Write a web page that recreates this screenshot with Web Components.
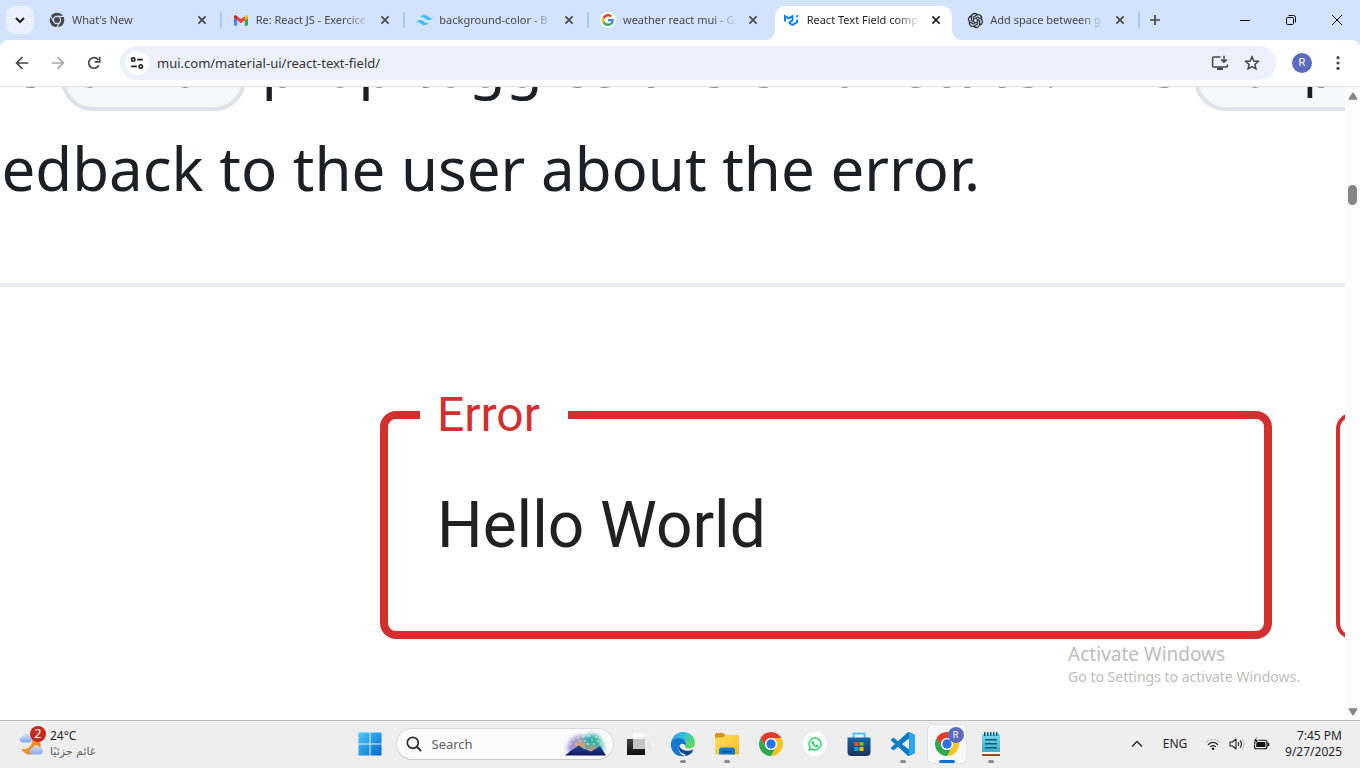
<!DOCTYPE html>
<html lang="en">
<head>
<meta charset="utf-8">
<title>React Text Field component - Material UI</title>
<style>
  html, body { height: 100%; margin: 0; }
  body { font-family: "Noto Sans", "Open Sans", sans-serif; font-size: 12px; color: #1f1f1f; background: #fff; overflow: hidden; }
</style>
</head>
<body>
<desktop-screen></desktop-screen>
<script>
const chromeSector = 'M12 6H22.39A12 12 0 0 0 1.61 6L6.8 15A6 6 0 0 1 12 6Z';
const chromeArt = `<path fill="#e33b2e" d="${chromeSector}"/><path fill="#fcc31e" transform="rotate(120 12 12)" d="${chromeSector}"/><path fill="#2da94f" transform="rotate(240 12 12)" d="${chromeSector}"/><circle cx="12" cy="12" r="6" fill="#fff"/><circle cx="12" cy="12" r="4.7" fill="#2a73e8"/>`;

const ICONS = {
  chevronDown: ['0 0 12 12', '<path d="M2 4 6 8 10 4" fill="none" stroke="#1f1f1f" stroke-width="2"/>'],
  chevronUp: ['0 0 12 12', '<path d="M1 8.5 6 3.5l5 5" fill="none" stroke="#222" stroke-width="1.3"/>'],
  close: ['0 0 10 10', '<path d="M1.4 1.4l7.2 7.2M8.6 1.4 1.4 8.6" stroke="currentColor" stroke-width="1.7"/>'],
  plus: ['0 0 12 12', '<path d="M6 1v10M1 6h10" stroke="#444746" stroke-width="1.7"/>'],
  back: ['0 0 14 14', '<path d="M7.4 1.2 1.6 7l5.8 5.8M1.8 7H13.3" fill="none" stroke="#474747" stroke-width="1.7"/>'],
  forward: ['0 0 14 14', '<path d="M6.6 1.2 12.4 7l-5.8 5.8M12.2 7H.7" fill="none" stroke="#a8a8a8" stroke-width="1.7"/>'],
  reload: ['0 0 14 14', '<path d="M11.8 9.2A5.3 5.3 0 1 1 11.4 4" fill="none" stroke="#474747" stroke-width="1.7"/><path d="M12.7.8V5.8H7.7" fill="none" stroke="#474747" stroke-width="1.7"/>'],
  tune: ['0 0 14 14', '<g fill="none" stroke="#1f1f1f" stroke-width="1.6"><circle cx="3.2" cy="3.6" r="1.7"/><path d="M7.2 3.6h5.6M1.2 10.4h5.6"/><circle cx="10.8" cy="10.4" r="1.7"/></g>'],
  install: ['0 0 18 16', '<path d="M9.5 1.9H2.6q-1 0-1 1v8q0 1 1 1h12.8q1 0 1-1V9.4" fill="none" stroke="#474747" stroke-width="1.5"/><path d="M6 12.5h6V15H6z" fill="#474747"/><path d="M13 .8v6M10.2 4.4 13 7.2l2.8-2.8" fill="none" stroke="#474747" stroke-width="1.5"/>'],
  star: ['0 0 16 16', '<path d="M8 1.9 9.8 6l4.5.4-3.4 3 1 4.4L8 11.5l-3.9 2.3 1-4.4-3.4-3L6.2 6Z" fill="none" stroke="#474747" stroke-width="1.5"/>'],
  dots: ['0 0 4 16', '<g fill="#474747"><circle cx="2" cy="2.7" r="1.6"/><circle cx="2" cy="8" r="1.6"/><circle cx="2" cy="13.3" r="1.6"/></g>'],
  minimize: ['0 0 10 10', '<path d="M0 5.5h10" stroke="#000"/>'],
  restore: ['0 0 10 10', '<rect x=".5" y="2.5" width="7" height="7" rx="1.2" fill="none" stroke="#000"/><path d="M2.6.5H7.5a2 2 0 0 1 2 2V7.4" fill="none" stroke="#000"/>'],
  exit: ['0 0 10 10', '<path d="M0 0l10 10M10 0 0 10" stroke="#000"/>'],
  chromeMono: ['0 0 24 24', '<circle cx="12" cy="12" r="11" fill="#474a4d"/><g fill="none" stroke="#d3e3fd" stroke-width="1.7"><circle cx="12" cy="12" r="5.4"/><path d="M12 6.6H23M7.3 14.7 1.8 5.2M16.7 14.7 11.2 24.2"/></g>'],
  gmail: ['0 0 24 18', '<path fill="#4285f4" d="M1.6 18h3.8V8.7L0 4.6v11.8C0 17.3.7 18 1.6 18"/><path fill="#34a853" d="M18.6 18h3.8c.9 0 1.6-.7 1.6-1.6V4.6l-5.4 4.1"/><path fill="#fbbc04" d="M18.6 1.6v7.1L24 4.6V2.5c0-2-2.3-3.2-3.9-2"/><path fill="#ea4335" d="M5.4 8.7V1.6L12 6.6l6.6-5v7.1l-6.6 5"/><path fill="#c5221f" d="M0 2.5v2.1l5.4 4.1V1.6L3.9.5C2.3-.7 0 .5 0 2.5"/>'],
  tailwind: ['2 4 20 16', '<path fill="#38bdf8" d="M12 6c-2.67 0-4.33 1.33-5 4 1-1.33 2.17-1.83 3.5-1.5.76.19 1.31.74 1.91 1.35.98 1 2.09 2.15 4.59 2.15 2.67 0 4.33-1.33 5-4-1 1.33-2.17 1.83-3.5 1.5-.76-.19-1.3-.74-1.91-1.35C15.61 7.15 14.5 6 12 6m-5 6c-2.67 0-4.33 1.33-5 4 1-1.33 2.17-1.83 3.5-1.5.76.19 1.3.74 1.91 1.35C8.39 16.85 9.5 18 12 18c2.67 0 4.33-1.33 5-4-1 1.33-2.17 1.83-3.5 1.5-.76-.19-1.3-.74-1.91-1.35C10.61 13.15 9.5 12 7 12z"/>'],
  google: ['-8 -8 64 64', '<circle cx="24" cy="24" r="32" fill="#fff"/><path fill="#ea4335" d="M24 9.500c3.540 0 6.710 1.220 9.210 3.600l6.850-6.850C35.900 2.380 30.470 0 24 0 14.620 0 6.510 5.380 2.560 13.220l7.980 6.190C12.430 13.720 17.740 9.500 24 9.500z"/><path fill="#4285f4" d="M46.980 24.550c0-1.570-.15-3.090-.38-4.550H24v9.020h12.940c-.58 2.960-2.260 5.480-4.780 7.180l7.730 6c4.510-4.180 7.090-10.360 7.090-17.650z"/><path fill="#fbbc05" d="M10.530 28.590c-.48-1.450-.76-2.990-.76-4.590s.27-3.140.76-4.590l-7.980-6.190C.92 16.460 0 20.120 0 24c0 3.880.92 7.540 2.560 10.780l7.970-6.190z"/><path fill="#34a853" d="M24 48c6.480 0 11.930-2.130 15.890-5.810l-7.730-6c-2.150 1.450-4.920 2.300-8.160 2.300-6.260 0-11.570-4.220-13.470-9.910l-7.980 6.190C6.510 42.620 14.620 48 24 48z"/>'],
  mui: ['0 0 24 24', '<path fill="#007fff" d="M0 2.475v10.39l3 1.733V7.67l4.5 2.6 4.5-2.6v3.465l-4.5 2.596v3.467l6 3.463 9-5.195V9.402l-3 1.733v2.598l-6 3.463-3-1.732 4.5-2.6V2.474L7.5 6.8ZM22.500 2.475l-3 1.733v3.465l3-1.733Z"/>'],
  openai: ['0 0 24 24', '<path fill="#202123" stroke="#202123" stroke-width=".5" d="M22.2819 9.8211a5.9847 5.9847 0 0 0-.5157-4.9108 6.0462 6.0462 0 0 0-6.5098-2.9A6.0651 6.0651 0 0 0 4.9807 4.1818a5.9847 5.9847 0 0 0-3.9977 2.9 6.0462 6.0462 0 0 0 .7427 7.0966 5.98 5.98 0 0 0 .511 4.9107 6.051 6.051 0 0 0 6.5146 2.9001A5.9847 5.9847 0 0 0 13.2599 24a6.0557 6.0557 0 0 0 5.7718-4.2058 5.9894 5.9894 0 0 0 3.9977-2.9001 6.0557 6.0557 0 0 0-.7475-7.0729zm-9.022 12.6081a4.4755 4.4755 0 0 1-2.8764-1.0408l.1419-.0804 4.7783-2.7582a.7948.7948 0 0 0 .3927-.6813v-6.7369l2.02 1.1686a.071.071 0 0 1 .038.052v5.5826a4.504 4.504 0 0 1-4.4945 4.4944zm-9.6607-4.1254a4.4708 4.4708 0 0 1-.5346-3.0137l.142.0852 4.783 2.7582a.7712.7712 0 0 0 .7806 0l5.8428-3.3685v2.3324a.0804.0804 0 0 1-.0332.0615L9.74 19.9502a4.4992 4.4992 0 0 1-6.1408-1.6464zM2.3408 7.8956a4.485 4.485 0 0 1 2.3655-1.9728V11.6a.7664.7664 0 0 0 .3879.6765l5.8144 3.3543-2.0201 1.1685a.0757.0757 0 0 1-.071 0l-4.8303-2.7865A4.504 4.504 0 0 1 2.3408 7.872zm16.5963 3.8558L13.1038 8.364 15.1192 7.2a.0757.0757 0 0 1 .071 0l4.8303 2.7913a4.4944 4.4944 0 0 1-.6765 8.1042v-5.6772a.79.79 0 0 0-.407-.667zm2.0107-3.0231l-.142-.0852-4.7735-2.7818a.7759.7759 0 0 0-.7854 0L9.409 9.2297V6.8974a.0662.0662 0 0 1 .0284-.0615l4.8303-2.7866a4.4992 4.4992 0 0 1 6.6802 4.66zM8.3065 12.863l-2.02-1.1638a.0804.0804 0 0 1-.038-.0567V6.0742a4.4992 4.4992 0 0 1 7.3757-3.4537l-.142.0805L8.704 5.459a.7948.7948 0 0 0-.3927.6813zm1.0976-2.3654l2.602-1.4998 2.6069 1.4998v2.9994l-2.5974 1.4997-2.6067-1.4997Z"/>'],
  weather: ['0 0 26 26', '<defs><linearGradient id="m" x2="1" y2="1"><stop stop-color="#fbb62c"/><stop offset="1" stop-color="#ea6a16"/></linearGradient><linearGradient id="c" y2="1" x2="0"><stop stop-color="#d9e5fa"/><stop offset="1" stop-color="#86aaea"/></linearGradient></defs><path fill="url(#m)" d="M3 17.500c5.500 2 11-1 11.500-9.500h3c6 1 7 10 2 13-5 4-13 3.500-16.500-3.500z"/><path fill="url(#c)" d="M4 11.500a3 3 0 0 1-.5-5.600Q5.200 5.500 5.500 4.500C6.500 1.500 10.500 1.500 11.300 4.500c3-.2 4 7 0 7z"/><path fill="url(#c)" d="M13.500 23.500a3 3 0 0 1-.5-5.600q1.700-.4 2-1.400c1-3 6-3 6.800.2 4 .3 4 6.800 0 6.800z"/>'],
  windows: ['0 0 24 24', '<defs><linearGradient id="w" x2="1" y2="1"><stop stop-color="#4ccbfb"/><stop offset="1" stop-color="#0067ce"/></linearGradient></defs><path fill="url(#w)" d="M.5.5h11v11H.5zM12.500.5h11v11h-11zM.5 12.500h11v11H.5zM12.500 12.500h11v11h-11z"/>'],
  search: ['0 0 16 16', '<circle cx="6.800" cy="6.800" r="5.500" fill="none" stroke="#2b2b2b" stroke-width="1.700"/><path d="m10.800 10.800 4.200 4.200" stroke="#2b2b2b" stroke-width="2"/>'],
  fireworks: ['0 0 44 24', '<defs><linearGradient id="h" x2="0" y2="1"><stop stop-color="#1f49a6"/><stop offset="1" stop-color="#121857"/></linearGradient><linearGradient id="s"><stop stop-color="#8f8de8"/><stop offset=".3" stop-color="#9a90cf"/><stop offset=".5" stop-color="#29a7b4"/><stop offset=".8" stop-color="#30b69e"/><stop offset="1" stop-color="#9ccfe0"/></linearGradient><filter id="b" x="-.2" y="-.2" width="1.4" height="1.4"><feGaussianBlur stdDeviation="2"/></filter></defs><g filter="url(#b)"><path fill="url(#s)" d="M4 20C2 12 8 4 15 4c5 0 5 1 8 0 5-3 13-1 14 4 3 4 4 8 3 12z"/><circle cx="16" cy="14" r="5" fill="#e0a458"/><path fill="#ee7f4c" d="M22 21l6-7 7 7z"/></g><path fill="url(#h)" d="M1 23.500l6-5 8-5 4 3 3 1 5 2 9-5.500 6 9.500z"/><g fill="#fff3b0"><circle cx="10" cy="8" r=".8"/><circle cx="14" cy="6" r=".7"/><circle cx="19" cy="5" r=".8"/><circle cx="7" cy="12" r=".7"/><circle cx="16" cy="9" r=".7"/><circle cx="21" cy="9" r=".8"/><circle cx="24" cy="12" r=".9"/><circle cx="28" cy="8" r=".8"/><circle cx="32" cy="5" r=".8"/><circle cx="34" cy="9" r=".8"/><circle cx="30" cy="12" r=".7"/><circle cx="37" cy="12" r=".7"/><circle cx="25" cy="4" r=".7"/><circle cx="12" cy="12" r=".7"/></g>'],
  taskview: ['0 0 24 24', '<defs><linearGradient id="d" x2="0" y2="1"><stop stop-color="#444"/><stop offset="1" stop-color="#0c0c0c"/></linearGradient><linearGradient id="l" x2="1" y2="1"><stop stop-color="#fff"/><stop offset="1" stop-color="#e2e2e2"/></linearGradient></defs><path fill="url(#l)" d="M6 1h18v16H6z"/><path fill="url(#d)" d="M0 7h18v16H0z"/><path fill="#c4c4c4" d="M6 7h12v10H6z"/>'],
  edge: ['0 0 24 24', '<defs><linearGradient id="e1" x2="1" y2=".6"><stop stop-color="#2b9be6"/><stop offset=".5" stop-color="#34c1d8"/><stop offset="1" stop-color="#5fdc55"/></linearGradient><linearGradient id="e2" x2="0" y2="1"><stop stop-color="#1b83d6"/><stop offset="1" stop-color="#0d5bb5"/></linearGradient></defs><path fill="url(#e1)" d="M0 11.500C.5 5 5.500 0 12 0c7.500 0 12 5.500 12 10.500 0 4-3 6-6 6-2.500 0-4-.8-4-1.500s1-1 1-3.500C15 9 12.500 7 9 7c-4 0-8 2-9 4.500z"/><path fill="url(#e2)" d="M0 12c0-4 4-6 8-5.500-3 2-4 4-4 7 0 5.500 4 9.500 9 10.400C5 25 0 19 0 12z"/><path fill="#1577cf" d="M0 12c.3-3.500 4.500-6 9-5.700 3.500.2 6 2.500 6 5.200 0 1-.4 1.800-.8 2.400C13 11 9.500 11 8 15c-1 4 2 8.500 6 8.900C6 25.500 0 20 0 12z"/><path fill="#0e4a92" d="M8.200 14C7 18 10 22 14 22c3.500 0 6-1.500 8-3.500.6-.6-.1-1-.6-.7-5.400 2.500-11.400.2-13.200-3.800zM14 23.800c3.500-.1 6.300-2 8.200-4.800-3 2-6 2.800-8.200 2.500z"/>'],
  explorer: ['0 0 24 24', '<defs><linearGradient id="f" x2="1" y2="1"><stop stop-color="#ffdf66"/><stop offset="1" stop-color="#fdb913"/></linearGradient></defs><path fill="#d9940a" d="M0 2.500Q0 1 1.500 1H8l3 2.500L8 7H0z"/><path fill="url(#f)" d="M0 5.500h8L10.500 3H22.500Q24 3 24 4.500v18H0z"/><path fill="#1278d2" d="M4 22.500V18q0-2.500 2.500-2.500h11Q20 15.500 20 18v4.500z"/><path fill="#0a4f9c" d="M7.500 19h9v1.500h-9z"/>'],
  chrome: ['0 0 24 24', chromeArt],
  whatsapp: ['-10 -10 44 44', '<circle cx="12" cy="12" r="22" fill="#fff"/><path fill="#25d366" stroke="#25d366" stroke-width=".8" d="M17.472 14.382c-.297-.149-1.758-.867-2.030-.967-.273-.099-.471-.148-.67.15-.197.297-.767.966-.94 1.164-.173.199-.347.223-.644.075-.297-.15-1.255-.463-2.390-1.475-.883-.788-1.480-1.761-1.653-2.059-.173-.297-.018-.458.13-.606.134-.133.298-.347.446-.52.149-.174.198-.298.298-.497.099-.198.05-.371-.025-.52-.075-.149-.669-1.612-.916-2.207-.242-.579-.487-.5-.669-.51-.173-.008-.371-.01-.57-.01-.198 0-.52.074-.792.372-.272.297-1.040 1.016-1.040 2.479 0 1.462 1.065 2.875 1.213 3.074.149.198 2.096 3.200 5.077 4.487.709.306 1.262.489 1.694.625.712.227 1.360.195 1.871.118.571-.085 1.758-.719 2.006-1.413.248-.694.248-1.289.173-1.413-.074-.124-.272-.198-.57-.347m-5.421 7.403h-.004a9.870 9.870 0 0 1-5.031-1.378l-.361-.214-3.741.982.998-3.648-.235-.374a9.860 9.860 0 0 1-1.510-5.260c.001-5.450 4.436-9.884 9.888-9.884 2.640 0 5.122 1.030 6.988 2.898a9.825 9.825 0 0 1 2.893 6.994c-.003 5.450-4.437 9.884-9.885 9.884m8.413-18.297A11.815 11.815 0 0 0 12.050 0C5.495 0 .16 5.335.157 11.892c0 2.096.547 4.142 1.588 5.945L.057 24l6.305-1.654a11.882 11.882 0 0 0 5.683 1.448h.005c6.554 0 11.890-5.335 11.893-11.893a11.821 11.821 0 0 0-3.480-8.413z"/>'],
  store: ['0 0 24 24', '<defs><linearGradient id="t" x2="0" y2="1"><stop stop-color="#1666ad"/><stop offset="1" stop-color="#1b3458"/></linearGradient></defs><path d="M6.500 6V1.500h11V6" fill="none" stroke="#4fc3f7" stroke-width="2"/><path fill="url(#t)" d="M.5 5.500h23V20q0 4-4 4h-15q-4 0-4-4z"/><path fill="#f25022" d="M7.500 10H11.500v4H7.500z"/><path fill="#7fba00" d="M12.500 10h4v4h-4z"/><path fill="#00a4ef" d="M7.500 15H11.500v4H7.500z"/><path fill="#ffb900" d="M12.500 15h4v4h-4z"/>'],
  vscode: ['0 0 24 24', '<path fill="#0a7bc8" d="M23.150 2.587L18.210.21a1.494 1.494 0 0 0-1.705.29l-9.460 8.630-4.120-3.128a.999.999 0 0 0-1.276.057L.327 7.261A1 1 0 0 0 .326 8.740L3.899 12 .326 15.260a1 1 0 0 0 .001 1.479L1.650 17.940a.999.999 0 0 0 1.276.057l4.120-3.128 9.460 8.630a1.492 1.492 0 0 0 1.704.29l4.942-2.377A1.500 1.500 0 0 0 24 20.060V3.939a1.500 1.500 0 0 0-.85-1.352zm-5.146 14.861L10.826 12l7.178-5.448v10.896z"/><path fill="#2ba3ee" d="M18 .2 24 3v18l-6 2.800z"/>'],
  notepad: ['0 0 24 24', '<defs><linearGradient id="n" x2="0" y2="1"><stop stop-color="#6fdcee"/><stop offset="1" stop-color="#3fa9c6"/></linearGradient></defs><path fill="#fff" d="M3 19h18v4H3z"/><path fill="#9a4a12" d="M3 22h18v2H3z"/><path fill="url(#n)" d="M3 2h18v18H3z"/><path fill="#0c5a72" d="M5 0h1.500v4H5zM8 0h1.500v4H8zM11 0h1.500v4H11zM14 0h1.500v4H14zM17 0h1.500v4H17zM6 7h12v1.500H6zM6 11h12v1.500H6zM6 15h12v1.500H6z"/>'],
  wifi: ['0 0 16 14', '<path d="M1 5.500q7-6.500 14 0" fill="none" stroke="#c2c2c2" stroke-width="1.100"/><g fill="none" stroke="#222" stroke-width="1.200"><path d="M3 7.700q5-4.600 10 0M5.200 9.900q2.800-2.600 5.600 0"/></g><circle cx="8" cy="11.800" r="1.300" fill="#222"/>'],
  volume: ['0 0 16 14', '<path d="M1 5h2.500L7 2v10L3.500 9H1z" fill="none" stroke="#222" stroke-width="1.100" stroke-linejoin="round"/><path d="M9 5q1.500 2 0 4M11 3.300q3 3.700 0 7.400" fill="none" stroke="#222" stroke-width="1.100"/><path d="M13 1.800q4 5.200 0 10.400" fill="none" stroke="#c2c2c2" stroke-width="1.100"/>'],
  battery: ['0 0 17 14', '<rect x="1.500" y="3.200" width="12.500" height="8.600" rx="2" fill="none" stroke="#111" stroke-width="1.100"/><rect x="3.200" y="5" width="9.200" height="5" fill="#111"/><path d="M14.500 5.800h1.700v3.400h-1.700z" fill="#111"/><path d="M4 -1 .5 4.500h2L1.800 8 5.500 3h-2z" fill="#111" stroke="#eee" stroke-width=".6"/>'],
  arrowUp: ['0 0 10 8', '<path d="M5 .5Q5.500.5 6 1.200L9.500 7q0 .8-.8.8H1.300Q.5 7.800.5 7L4 1.200Q4.500.5 5 .5z" fill="#858585"/>'],
  arrowDown: ['0 0 10 8', '<path d="M5 7.500Q5.500 7.500 6 6.800L9.500 1q0-.8-.8-.8H1.300Q.5.2.5 1L4 6.800Q4.500 7.500 5 7.500z" fill="#858585"/>']
};

/* Registers an element whose shadow root is cloned from one template. */
function component(name, css, markup, setup) {
  const template = document.createElement('template');
  template.innerHTML = `<style>*{box-sizing:border-box}button,input{font:inherit;color:inherit;border:0;background:none;padding:0;margin:0;outline:0}button{display:grid;place-items:center}${css}</style>${markup}`;
  customElements.define(name, class extends HTMLElement {
    constructor() {
      super();
      this.attachShadow({ mode: 'open' }).append(template.content.cloneNode(true));
    }
    connectedCallback() { if (setup) setup(this, this.shadowRoot); }
  });
}

component('ui-icon', ':host{display:block;flex:none}svg{display:block;width:100%;height:100%;overflow:visible}', '<svg aria-hidden="true"></svg>', (host, root) => {
  const [box, art] = ICONS[host.getAttribute('name')];
  const svg = root.querySelector('svg');
  svg.setAttribute('viewBox', box);
  svg.innerHTML = art;
  host.style.width = host.getAttribute('w') + 'px';
  host.style.height = (host.getAttribute('h') || host.getAttribute('w')) + 'px';
});

component('user-avatar', ':host{display:grid;place-items:center;width:20px;height:20px;border-radius:50%;background:#5c6bc0;color:#fff;font:11px/20px Roboto,sans-serif}:host([small]){width:16px;height:16px;font-size:9px;line-height:16px}', '<slot></slot>');

component('browser-tab', `
  :host{display:flex;position:relative;min-width:0;height:40px;padding:6px 3px 0;color:#474747;font-size:11px}
  .face{display:flex;flex:1;min-width:0;align-items:center;height:34px;padding:0 8px 6px 9px}
  .title{flex:1;min-width:0;margin:0 8px 0 7px;overflow:hidden;white-space:nowrap;line-height:20px;-webkit-mask-image:linear-gradient(90deg,#000 calc(100% - 24px),transparent);mask-image:linear-gradient(90deg,#000 calc(100% - 24px),transparent)}
  .icon{display:grid;place-items:center;width:16px;height:16px;flex:none}
  button{width:16px;height:16px;color:#474747}
  :host([divider])::after{content:"";position:absolute;right:-1px;top:12px;width:2px;height:16px;background:#a8c7fa}
  :host([active]){color:#1f1f1f}
  :host([active]) .face{background:#fff;border-radius:10px 10px 0 0}
  :host([active])::before{content:"";position:absolute;left:-7px;right:-7px;bottom:0;height:10px;background:radial-gradient(circle at 0 0,transparent 10px,#fff 10px) left/10px 10px no-repeat,radial-gradient(circle at 100% 0,transparent 10px,#fff 10px) right/10px 10px no-repeat}
  :host([active]) button{color:#1f1f1f}`,
  '<div class="face"><span class="icon"><slot name="icon"></slot></span><span class="title"><slot></slot></span><button aria-label="Close tab"><ui-icon name="close" w="10"></ui-icon></button></div>');

component('tab-strip', `
  :host{display:flex;height:40px;background:#d3e3fd;flex:none}
  .search{width:28px;height:28px;margin:6px 3px 0 6px;border-radius:9px;background:#ebf1fd;flex:none}
  nav{display:grid;grid-template-columns:repeat(6,minmax(0,1fr));flex:0 1 1102px;min-width:0}
  .new{width:32px;flex:none}
  .window{display:flex;margin-left:auto;flex:none}
  .window button{width:46px}`,
  `<button class="search" aria-label="Search tabs"><ui-icon name="chevronDown" w="12"></ui-icon></button>
  <nav>
    <browser-tab divider><ui-icon slot="icon" name="chromeMono" w="16"></ui-icon>What's New</browser-tab>
    <browser-tab divider><ui-icon slot="icon" name="gmail" w="14" h="11"></ui-icon>Re: React JS - Exercice</browser-tab>
    <browser-tab divider><ui-icon slot="icon" name="tailwind" w="17" h="14"></ui-icon>background-color - B</browser-tab>
    <browser-tab><ui-icon slot="icon" name="google" w="16"></ui-icon>weather react mui - G</browser-tab>
    <browser-tab active><ui-icon slot="icon" name="mui" w="15"></ui-icon>React Text Field comp</browser-tab>
    <browser-tab divider><ui-icon slot="icon" name="openai" w="15"></ui-icon>Add space between g</browser-tab>
  </nav>
  <button class="new" aria-label="New tab"><ui-icon name="plus" w="12"></ui-icon></button>
  <div class="window">
    <button aria-label="Minimize"><ui-icon name="minimize" w="10"></ui-icon></button>
    <button aria-label="Restore"><ui-icon name="restore" w="10"></ui-icon></button>
    <button aria-label="Close"><ui-icon name="exit" w="10"></ui-icon></button>
  </div>`);

component('browser-toolbar', `
  :host{display:block;background:#d3e3fd;flex:none}
  .bar{display:flex;align-items:center;height:47px;padding:0 4px;background:#fff;border-radius:8px 8px 0 0;border-bottom:1px solid #dfe1e0}
  .bar>button{width:36px;height:36px}
  .omnibox{display:flex;align-items:center;flex:1;min-width:0;height:34px;margin:0 8px;padding:0 8px 0 5px;border-radius:17px;background:#ecf0fa}
  .omnibox button{width:32px;height:24px}
  .omnibox .site{width:24px;border-radius:50%;background:#fff}
  input{flex:1;min-width:0;margin-left:8px;font-size:13px;height:24px;color:#333}`,
  `<div class="bar">
    <button aria-label="Back"><ui-icon name="back" w="14"></ui-icon></button>
    <button aria-label="Forward"><ui-icon name="forward" w="14"></ui-icon></button>
    <button aria-label="Reload"><ui-icon name="reload" w="14"></ui-icon></button>
    <div class="omnibox">
      <button class="site" aria-label="Site information"><ui-icon name="tune" w="14"></ui-icon></button>
      <input aria-label="Address" value="mui.com/material-ui/react-text-field/">
      <button aria-label="Install"><ui-icon name="install" w="18" h="16"></ui-icon></button>
      <button aria-label="Bookmark"><ui-icon name="star" w="16"></ui-icon></button>
    </div>
    <button aria-label="Profile"><user-avatar>R</user-avatar></button>
    <button aria-label="Menu"><ui-icon name="dots" w="4" h="16"></ui-icon></button>
  </div>`);

component('code-chip', ':host{display:inline-block;padding:0 9px;border:4px solid #dfe2e7;border-radius:32px;background:#f6f7f9;font:53px/68px "Liberation Mono",monospace}', '<slot></slot>');

component('outlined-field', `
  :host{display:block;flex:none;width:892px;font-family:Roboto,sans-serif}
  fieldset{margin:0;min-width:0;height:248px;padding:0 49px;border:8px solid #d32f2f;border-radius:16px}
  legend{margin:0 0 0 -17px;padding:0 28px 0 17px;font-size:48px;line-height:48px;height:48px;color:#d32f2f}
  input{display:block;width:100%;height:92px;margin-top:40px;font-size:64px;color:#212121}
  :host([resting]) fieldset{border-width:4px}`,
  '<fieldset><legend><label for="value"></label></legend><input id="value"></fieldset>',
  (host, root) => {
    root.querySelector('label').textContent = host.getAttribute('label');
    root.querySelector('input').value = host.getAttribute('value');
  });

component('docs-page', `
  :host{display:block;flex:1;min-width:0;overflow:hidden;background:#fff}
  p{margin:-75px 0 0;font:60px/104px "Noto Sans",sans-serif;color:#1c2025;white-space:nowrap}
  .line{display:block;height:104px}
  .first{margin-left:-59px}
  .second{margin-left:-53px}
  section{margin-top:63px;border-top:4px solid #e8eaee;padding:104px 0 0 380px;display:flex;gap:64px}`,
  `<p><span class="line first">The <code-chip>error</code-chip> prop toggles the error state. The <code-chip>helperText</code-chip> prop</span><span class="line second">feedback to the user about the error.</span></p>
  <section><outlined-field label="Error" value="Hello World"></outlined-field><outlined-field resting label="Error" value="Hello World"></outlined-field></section>`);

component('scroll-bar', `
  :host{display:flex;flex-direction:column;align-items:center;flex:none;width:15px;padding:5px 0 4px;background:#fcfcfc}
  .track{flex:1;width:10px;padding-top:85px}
  .thumb{width:9px;height:20px;border-radius:5px;background:#858585;margin:0 auto}`,
  '<ui-icon name="arrowUp" w="10" h="8"></ui-icon><div class="track"><div class="thumb"></div></div><ui-icon name="arrowDown" w="10" h="8"></ui-icon>');

component('activation-notice', `
  :host{position:absolute;right:60px;bottom:33px;color:#bdbdbd;white-space:nowrap;pointer-events:none}
  strong{display:block;font-weight:400;font-size:19px;line-height:26px}
  span{display:block;font-size:14px;line-height:20px}`,
  '<strong>Activate Windows</strong><span>Go to Settings to activate Windows.</span>');

component('task-button', `
  :host{display:block;position:relative;width:44px;height:46px}
  button{width:38px;height:38px;margin:4px 3px;border-radius:5px}
  :host([running])::after{content:"";position:absolute;left:19px;bottom:4px;width:6px;height:3px;border-radius:2px;background:#8a8a8a}
  :host([active]) button{background:#f8f8f8;box-shadow:0 0 0 1px #e4e4e4}
  :host([active])::after{left:14px;width:16px;background:#0b74d1}
  ::slotted(user-avatar){position:absolute;right:5px;top:6px}`,
  '<button><slot></slot></button><slot name="badge"></slot>',
  (host, root) => root.querySelector('button').setAttribute('aria-label', host.getAttribute('label')));

component('task-bar', `
  :host{display:grid;grid-template-columns:1fr auto 1fr;box-sizing:border-box;height:48px;padding-bottom:1px;flex:none;background:#eee;border-top:1px solid #bdbdbd;line-height:16px}
  .weather{display:flex;align-items:center;gap:6px;justify-self:start;padding-left:18px;position:relative;text-align:left}
  .weather b{position:absolute;left:30px;top:5px;width:16px;height:16px;border-radius:50%;background:#c42b1c;color:#fff;font-weight:400;text-align:center}
  .weather span{display:block}
  .weather .ar{color:#5c5c5c;font-family:"DejaVu Sans",sans-serif;font-size:11px;direction:rtl}
  .apps{display:flex;align-items:center}
  .search{display:flex;align-items:center;width:218px;height:32px;margin:0 3px 0 4px;padding:0 5px 0 9px;border:1px solid #dadada;border-bottom-color:#c8c8c8;border-radius:16px;background:#fbfbfb}
  .search input{flex:1;min-width:0;margin-left:10px;font-size:13px;height:24px}
  .search input::placeholder{color:#5f5f5f;opacity:1}
  .tray{display:flex;align-items:center;justify-content:flex-end;padding-right:18px}
  .tray button{height:40px}
  .clock{display:block;text-align:right}
  .clock span{display:block}`,
  `<button class="weather"><ui-icon name="weather" w="26"></ui-icon><b>2</b><span><span>24°C</span><span class="ar" lang="ar">غائم جزئيًا</span></span></button>
  <div class="apps">
    <task-button label="Start"><ui-icon name="windows" w="24"></ui-icon></task-button>
    <label class="search"><ui-icon name="search" w="16"></ui-icon><input type="search" placeholder="Search" aria-label="Search"><ui-icon name="fireworks" w="44" h="24"></ui-icon></label>
    <task-button label="Task view"><ui-icon name="taskview" w="24"></ui-icon></task-button>
    <task-button label="Edge" running><ui-icon name="edge" w="24"></ui-icon></task-button>
    <task-button label="File Explorer" running><ui-icon name="explorer" w="24"></ui-icon></task-button>
    <task-button label="Chrome"><ui-icon name="chrome" w="24"></ui-icon></task-button>
    <task-button label="WhatsApp"><ui-icon name="whatsapp" w="24"></ui-icon></task-button>
    <task-button label="Store"><ui-icon name="store" w="24"></ui-icon></task-button>
    <task-button label="Visual Studio Code" running><ui-icon name="vscode" w="24"></ui-icon></task-button>
    <task-button label="Chrome, profile R" running active><ui-icon name="chrome" w="24"></ui-icon><user-avatar slot="badge" small>R</user-avatar></task-button>
    <task-button label="Notepad" running><ui-icon name="notepad" w="24"></ui-icon></task-button>
  </div>
  <div class="tray">
    <button aria-label="Hidden icons" style="width:32px"><ui-icon name="chevronUp" w="12"></ui-icon></button>
    <button style="width:44px">ENG</button>
    <button aria-label="Network" style="width:24px;margin-left:4px"><ui-icon name="wifi" w="16" h="14"></ui-icon></button>
    <button aria-label="Volume" style="width:24px"><ui-icon name="volume" w="16" h="14"></ui-icon></button>
    <button aria-label="Battery" style="width:24px"><ui-icon name="battery" w="17" h="14"></ui-icon></button>
    <button style="margin-left:12px"><span class="clock"><span>7:45 PM</span><span>9/27/2025</span></span></button>
  </div>`);

component('desktop-screen', `
  :host{display:flex;flex-direction:column;height:100vh}
  main{display:flex;flex:1;min-height:0;position:relative;overflow:hidden}`,
  `<tab-strip></tab-strip><browser-toolbar></browser-toolbar>
  <main><docs-page></docs-page><scroll-bar></scroll-bar><activation-notice></activation-notice></main>
  <task-bar></task-bar>`);
</script>
</body>
</html>
